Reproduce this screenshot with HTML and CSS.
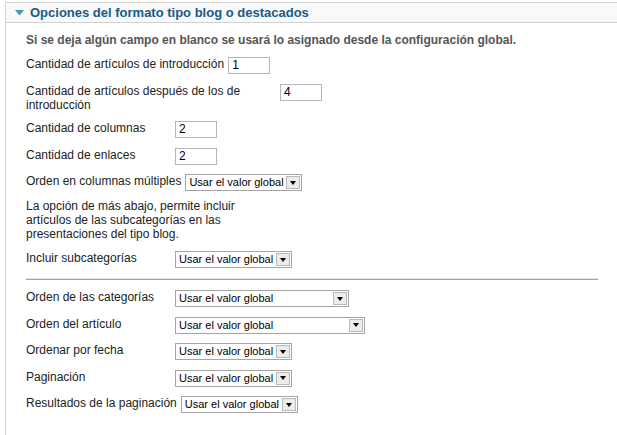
FILE: index.html
```html
<!DOCTYPE html>
<html>
<head>
<meta charset="utf-8">
<link rel="stylesheet" href="styles.css">
</head>
<body>
<div class="panel">
  <div class="panel-head">
    <svg class="caret" width="9" height="6" viewBox="0 0 9 6"><polygon points="0,0 9,0 4.5,5.5" fill="#3a9bc0"/></svg>
    <span class="title">Opciones del formato tipo blog o destacados</span>
  </div>
  <div class="panel-body">
    <p class="intro">Si se deja algún campo en blanco se usará lo asignado desde la configuración global.</p>

    <div class="row">
      <label class="lbl">Cantidad de artículos de introducción</label>
      <span class="txt">1</span>
    </div>
    <div class="row">
      <label class="lbl">Cantidad de artículos después de los de introducción</label>
      <span class="txt">4</span>
    </div>
    <div class="row">
      <label class="lbl">Cantidad de columnas</label>
      <span class="txt">2</span>
    </div>
    <div class="row">
      <label class="lbl">Cantidad de enlaces</label>
      <span class="txt">2</span>
    </div>
    <div class="row">
      <label class="lbl">Orden en columnas múltiples</label>
      <span class="sel s-short"><span class="sel-val">Usar el valor global</span><span class="sel-btn"><i class="arrow"></i></span></span>
    </div>

    <p class="note">La opción de más abajo, permite incluir artículos de las subcategorías en las presentaciones del tipo blog.</p>

    <div class="row">
      <label class="lbl">Incluir subcategorías</label>
      <span class="sel s-short"><span class="sel-val">Usar el valor global</span><span class="sel-btn"><i class="arrow"></i></span></span>
    </div>

    <hr class="sep">

    <div class="row">
      <label class="lbl">Orden de las categorías</label>
      <span class="sel s-mid"><span class="sel-val">Usar el valor global</span><span class="sel-btn"><i class="arrow"></i></span></span>
    </div>
    <div class="row">
      <label class="lbl">Orden del artículo</label>
      <span class="sel s-long"><span class="sel-val">Usar el valor global</span><span class="sel-btn"><i class="arrow"></i></span></span>
    </div>
    <div class="row">
      <label class="lbl">Ordenar por fecha</label>
      <span class="sel s-short"><span class="sel-val">Usar el valor global</span><span class="sel-btn"><i class="arrow"></i></span></span>
    </div>
    <div class="row">
      <label class="lbl">Paginación</label>
      <span class="sel s-short"><span class="sel-val">Usar el valor global</span><span class="sel-btn"><i class="arrow"></i></span></span>
    </div>
    <div class="row">
      <label class="lbl">Resultados de la paginación</label>
      <span class="sel s-short"><span class="sel-val">Usar el valor global</span><span class="sel-btn"><i class="arrow"></i></span></span>
    </div>
  </div>
</div>
</body>
</html>
```
FILE: styles.css
```css
html, body {
  margin: 0;
  padding: 0;
  background: #fff;
  font-family: "Liberation Sans", Arial, sans-serif;
  color: #222;
}
.panel {
  margin: 2px 0 0 5px;
  border-left: 1px solid #d6d6d6;
  height: 433px;
  box-sizing: border-box;
}
.panel-head {
  display: flex;
  align-items: center;
  height: 19px;
  border-top: 1px solid #d0d0d0;
  border-bottom: 1px solid #d0d0d0;
  background: #f9f9f9;
  padding-left: 9px;
}
.caret {
  margin-right: 6px;
  margin-top: 1px;
}
.title {
  font-weight: bold;
  font-size: 13px;
  color: #1a5a8a;
}
.panel-body {
  padding: 0 19px 0 20px;
}
.intro {
  margin: 10px 0 10px;
  font-size: 12px;
  font-weight: bold;
  color: #555;
  line-height: 14px;
}
.row {
  display: flex;
  align-items: flex-start;
  margin-bottom: 9.5px;
}
.lbl {
  font-size: 12px;
  line-height: 14px;
  min-width: 145px;
  max-width: 250px;
  margin-right: 4px;
  padding-top: 0;
}
.txt {
  box-sizing: border-box;
  width: 42px;
  height: 17px;
  border: 1px solid #b5b5b5;
  font-size: 12px;
  line-height: 15px;
  padding-left: 3px;
  color: #000;
}
.note {
  margin: -1.5px 0 10px;
  font-size: 12px;
  line-height: 14px;
  width: 230px;
}
.sep {
  margin: 0 0 10.5px;
  height: 0;
  border: 0;
  border-top: 1px solid #e6e6e6;
  border-bottom: 1px solid #a0a0a0;
}
.sel {
  box-sizing: border-box;
  display: flex;
  align-items: center;
  height: 17px;
  border: 1px solid #a5a5a5;
  background: #fff;
  padding-right: 1px;
}
.s-short { width: 117px; }
.s-mid { width: 174px; }
.s-long { width: 190px; }
.sel-val {
  flex: 1;
  font-size: 11px;
  line-height: 15px;
  padding-left: 3px;
  color: #000;
  white-space: nowrap;
  overflow: hidden;
}
.sel-btn {
  box-sizing: border-box;
  width: 14px;
  height: 13px;
  border: 1px solid #b9b9b9;
  background: #ececec;
  display: flex;
  align-items: center;
  justify-content: center;
}
.arrow {
  width: 0;
  height: 0;
  border-left: 3.5px solid transparent;
  border-right: 3.5px solid transparent;
  border-top: 4px solid #000;
}
```
